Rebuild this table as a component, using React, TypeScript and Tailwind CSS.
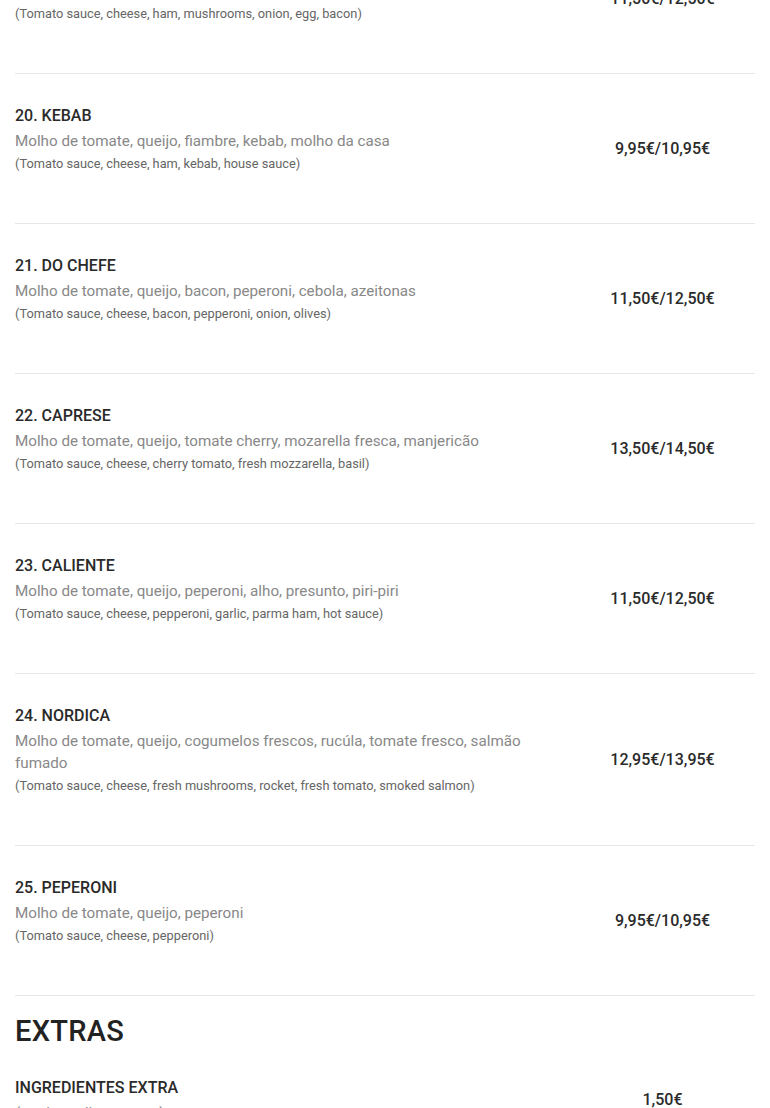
import React from 'react';

type Item = {
  name: string;
  pt: string;
  en?: string;
  price: string;
};

const pizzas: Item[] = [
  {
    name: '19. COMPLETA',
    pt: 'Molho de tomate, queijo, fiambre, cogumelos, cebola, ovo, bacon',
    en: '(Tomato sauce, cheese, ham, mushrooms, onion, egg, bacon)',
    price: '11,50€/12,50€',
  },
  {
    name: '20. KEBAB',
    pt: 'Molho de tomate, queijo, fiambre, kebab, molho da casa',
    en: '(Tomato sauce, cheese, ham, kebab, house sauce)',
    price: '9,95€/10,95€',
  },
  {
    name: '21. DO CHEFE',
    pt: 'Molho de tomate, queijo, bacon, peperoni, cebola, azeitonas',
    en: '(Tomato sauce, cheese, bacon, pepperoni, onion, olives)',
    price: '11,50€/12,50€',
  },
  {
    name: '22. CAPRESE',
    pt: 'Molho de tomate, queijo, tomate cherry, mozarella fresca, manjericão',
    en: '(Tomato sauce, cheese, cherry tomato, fresh mozzarella, basil)',
    price: '13,50€/14,50€',
  },
  {
    name: '23. CALIENTE',
    pt: 'Molho de tomate, queijo, peperoni, alho, presunto, piri-piri',
    en: '(Tomato sauce, cheese, pepperoni, garlic, parma ham, hot sauce)',
    price: '11,50€/12,50€',
  },
  {
    name: '24. NORDICA',
    pt: 'Molho de tomate, queijo, cogumelos frescos, rucúla, tomate fresco, salmão fumado',
    en: '(Tomato sauce, cheese, fresh mushrooms, rocket, fresh tomato, smoked salmon)',
    price: '12,95€/13,95€',
  },
  {
    name: '25. PEPERONI',
    pt: 'Molho de tomate, queijo, peperoni',
    en: '(Tomato sauce, cheese, pepperoni)',
    price: '9,95€/10,95€',
  },
];

const extras: Item[] = [
  {
    name: 'INGREDIENTES EXTRA',
    pt: '(por ingrediente extra)',
    price: '1,50€',
  },
];

const MenuRow: React.FC<{ item: Item; last?: boolean }> = ({ item, last }) => (
  <div className={`grid grid-cols-[75%_25%] items-center ${last ? '' : 'border-b border-[#e6e6e6]'}`}>
    <div className={`pt-[30px] pr-[20px] ${item.en ? 'pb-[48px]' : 'pb-[29px]'}`}>
      <h3 className="text-[16px] leading-[24px] font-medium text-[#2a2a2a]">{item.name}</h3>
      <p className="mt-[2px] text-[15.2px] leading-[22px] text-[#888]">{item.pt}</p>
      {item.en && <p className="mt-[1px] text-[12.8px] leading-[22px] text-[#666]">{item.en}</p>}
    </div>
    <div className="text-center text-[16px] leading-[24px] font-medium text-[#2a2a2a]">{item.price}</div>
  </div>
);

export default function App() {
  return (
    <div className="min-h-screen bg-white overflow-hidden" style={{ fontFamily: 'Roboto, "Liberation Sans", sans-serif' }}>
      <div className="px-[15px] -mt-[76px]">
        {pizzas.map((p) => (
          <MenuRow key={p.name} item={p} />
        ))}

        <h2 className="pt-[20px] text-[29px] leading-[30px] font-medium tracking-[0.3px] text-[#222]">EXTRAS</h2>
        {extras.map((e, i) => (
          <MenuRow key={e.name} item={e} last={i === extras.length - 1} />
        ))}
      </div>
    </div>
  );
}
